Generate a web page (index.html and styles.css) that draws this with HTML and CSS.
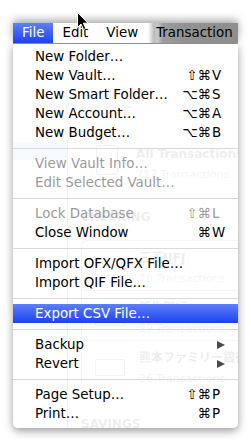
FILE: index.html
```html
<!DOCTYPE html>
<html>
<head>
<meta charset="utf-8">
<link rel="stylesheet" href="styles.css">
</head>
<body>
<div class="appwin" aria-hidden="true">
  <div class="aw-top">Show Online Page</div>
  <div class="aw-body">
    <div class="aw-side"><div class="aw-sel"></div></div>
    <div class="aw-main">
      <div class="aw-all">
        <div class="aw-doc"></div>
        <div>
          <div class="aw-name">All Transactions</div>
          <div class="aw-count">717 Transactions</div>
        </div>
      </div>
      <div class="aw-sect">CHECKING</div>
      <div class="aw-cards">
        <div class="aw-card"><div class="aw-bank"></div><div><div class="aw-name">三菱UFJ</div><div class="aw-count">18 Transactions</div></div></div>
        <div class="aw-card"><div class="aw-bank"></div><div><div class="aw-name">新生銀行</div><div class="aw-count">29 Transactions</div></div></div>
        <div class="aw-card"><div class="aw-bank"></div><div><div class="aw-name">熊本ファミリー銀行</div><div class="aw-count">26 Transactions</div></div></div>
      </div>
      <div class="aw-sect">SAVINGS</div>
    </div>
  </div>
</div>

<div class="menuwrap">
  <div class="menubar">
    <span class="mb-item active">File</span>
    <span class="mb-item">Edit</span>
    <span class="mb-item">View</span>
    <span class="mb-item">Transaction</span>
  </div>
  <div class="menu">
    <div class="mi"><span class="label">New Folder…</span></div>
    <div class="mi"><span class="label">New Vault…</span><span class="sc"><span class="mods">⇧⌘</span><span class="key">V</span></span></div>
    <div class="mi"><span class="label">New Smart Folder…</span><span class="sc"><span class="mods">⌥⌘</span><span class="key">S</span></span></div>
    <div class="mi"><span class="label">New Account…</span><span class="sc"><span class="mods">⌥⌘</span><span class="key">A</span></span></div>
    <div class="mi"><span class="label">New Budget…</span><span class="sc"><span class="mods">⌥⌘</span><span class="key">B</span></span></div>
    <div class="sep"></div>
    <div class="mi dis"><span class="label">View Vault Info…</span></div>
    <div class="mi dis"><span class="label">Edit Selected Vault…</span></div>
    <div class="sep"></div>
    <div class="mi dis"><span class="label">Lock Database</span><span class="sc"><span class="mods">⇧⌘</span><span class="key">L</span></span></div>
    <div class="mi"><span class="label">Close Window</span><span class="sc"><span class="mods">⌘</span><span class="key">W</span></span></div>
    <div class="sep"></div>
    <div class="mi"><span class="label">Import OFX/QFX File…</span></div>
    <div class="mi"><span class="label">Import QIF File…</span></div>
    <div class="sep"></div>
    <div class="mi hl"><span class="label">Export CSV File…</span></div>
    <div class="sep"></div>
    <div class="mi"><span class="label">Backup</span><span class="arrow"></span></div>
    <div class="mi"><span class="label">Revert</span><span class="arrow"></span></div>
    <div class="sep"></div>
    <div class="mi"><span class="label">Page Setup…</span><span class="sc"><span class="mods">⇧⌘</span><span class="key">P</span></span></div>
    <div class="mi"><span class="label">Print…</span><span class="sc"><span class="mods">⌘</span><span class="key">P</span></span></div>
  </div>
</div>

<svg class="cursor" width="14" height="20" viewBox="0 0 14 20">
  <path d="M1.5 1.5 L1.5 16.5 L5 13 L7.5 18.5 L9.8 17.5 L7.4 12.2 L12 12.2 Z" fill="#000" stroke="#fff" stroke-width="1" stroke-linejoin="round"/>
</svg>
</body>
</html>
```

FILE: styles.css
```css
* { box-sizing: border-box; }
html, body { margin: 0; }
body {
  width: 251px;
  height: 443px;
  overflow: hidden;
  background: #fff;
  position: relative;
  font-family: "DejaVu Sans", "Noto Sans CJK JP", sans-serif;
  font-size: 13.4px;
}

/* faint application window seen through the translucent menu */
.appwin {
  position: absolute;
  left: 13px;
  top: 44px;
  width: 225px;
  height: 384px;
  overflow: hidden;
  z-index: 0;
}
.aw-top {
  height: 96px;
  padding: 57px 0 0 19px;
  font-size: 11px;
  color: #444;
}
.aw-body {
  display: grid;
  grid-template-columns: 55px 1fr;
  height: 288px;
}
.aw-side { border-right: 1px solid #333; padding-top: 2px; }
.aw-sel { height: 18px; background: #86a8e2; }
.aw-main { padding-left: 13px; }
.aw-all {
  display: flex;
  align-items: flex-start;
  gap: 18px;
  margin-top: 5px;
  padding-left: 15px;
  height: 38px;
}
.aw-doc { width: 22px; height: 30px; border: 1.5px solid #555; border-radius: 2px; }
.aw-name { font-weight: bold; font-size: 12px; line-height: 18px; color: #000; white-space: nowrap; }
.aw-count { font-size: 11px; line-height: 16px; color: #555; margin-top: 4px; white-space: nowrap; }
.aw-sect { font-weight: bold; font-size: 12px; line-height: 16px; color: #000; margin-top: 26px; }
.aw-cards { margin-top: 15px; }
.aw-card {
  height: 50px;
  display: flex;
  gap: 14px;
  padding: 8px 0 0 13px;
  border-top: 1px solid #777;
  border-left: 1px solid #777;
}
.aw-card:first-child { border-top-left-radius: 6px; }
.aw-bank { width: 30px; height: 17px; border: 1px solid #555; margin-top: 10px; }

/* menu */
.menuwrap {
  position: relative;
  z-index: 1;
  margin: 23px 0 0 13px;
  width: 225px;
}
.menubar {
  position: relative;
  display: flex;
  height: 21px;
  line-height: 20px;
  border-bottom: 1px solid #8f8f8f;
  background: linear-gradient(to right, #fff 0, #fff 135px, #dedede 138px, #b9b9b9 141px, #cacaca 144px, #9d9d9d 150px, #929292 170px, #8e8e8e 100%);
}
.menubar::before {
  content: "";
  position: absolute;
  left: 0;
  right: 0;
  top: 0;
  height: 20px;
  box-shadow: 0 -3px 8px rgba(0, 0, 0, 0.35);
  z-index: -1;
}
.mb-item { padding: 0 9px; color: #000; }
.mb-item.active { background: linear-gradient(#607ff8, #1c42f2); color: #fff; }

.menu {
  background: rgba(255, 255, 255, 0.93);
  padding: 3px 0 5px;
  border-radius: 0 0 5px 5px;
  box-shadow: 0 3px 9px rgba(0, 0, 0, 0.4);
}
.mi {
  display: flex;
  align-items: center;
  height: 19px;
  line-height: 19px;
  padding: 0 12px 0 22px;
  color: #000;
  white-space: nowrap;
}
.mi .label { flex: 1; }
.mi.dis { color: #9a9a9a; }
.mi.hl { background: linear-gradient(#607ff8, #1c42f2); color: #fff; }
.sc { display: flex; }
.mods { text-align: right; }
.key { width: 14px; margin-left: 1px; }
.sep { height: 1px; margin: 6px 0 5px; background: #d9d9d9; }
.arrow {
  width: 0;
  height: 0;
  margin-right: 1px;
  border-left: 8px solid #4a4a4a;
  border-top: 4.5px solid transparent;
  border-bottom: 4.5px solid transparent;
}

.cursor { position: absolute; left: 76px; top: 11px; z-index: 5; }
```
